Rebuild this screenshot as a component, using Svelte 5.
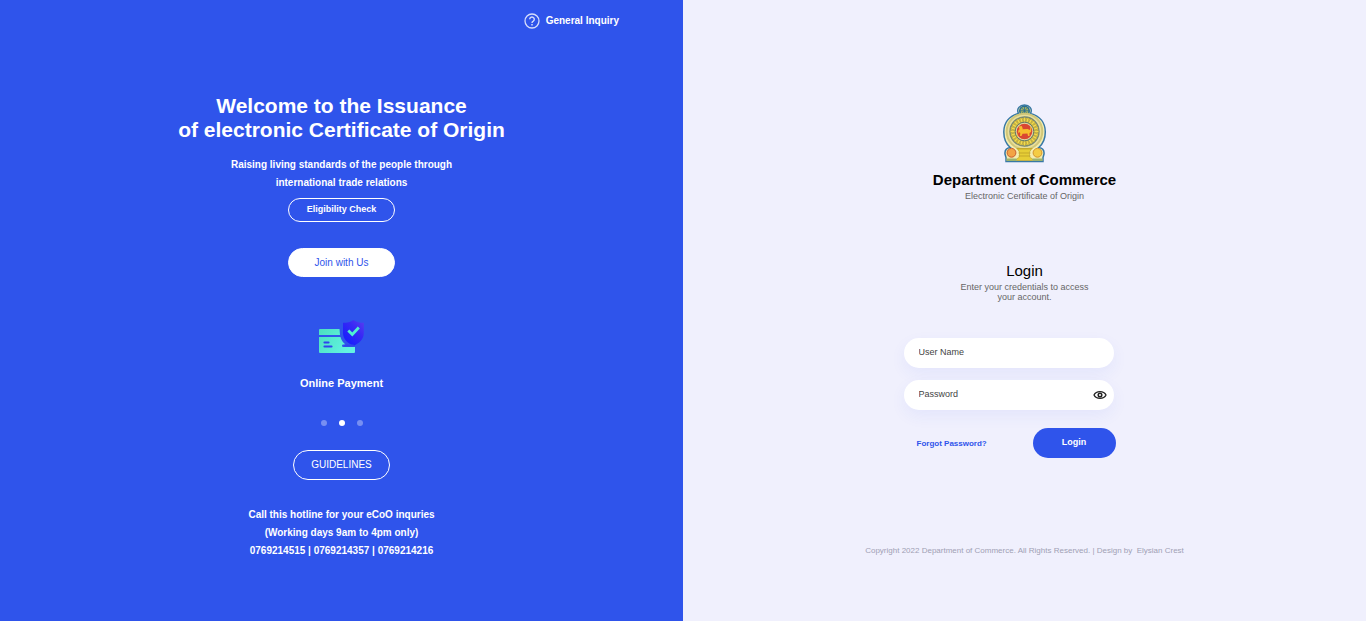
<script>
  let username = $state('');
  let password = $state('');
  let visible = $state(false);
  let active = $state(1);
  const slides = ['Registration', 'Online Payment', 'Certificates'];
  const rays = Array.from({ length: 24 }, (_, i) => i * 15);
</script>

<main>
  <section class="intro">
    <header>
      <a class="inquiry" href="#inquiry">
        <svg width="16" height="16" viewBox="0 0 16 16" fill="none" stroke="currentColor" aria-hidden="true">
          <circle cx="8" cy="8" r="7" stroke-width="1.3" />
          <path d="M5.700 6.300a2.300 2.200 0 1 1 3.600 1.800C8.300 8.700 8 9 8 9.900" stroke-width="1.400" />
          <path d="M8 11v1.400" stroke-width="1.500" />
        </svg>
        <span>General Inquiry</span>
      </a>
    </header>

    <h1>Welcome to the Issuance<br />of electronic Certificate of Origin</h1>
    <p class="lead">Raising living standards of the people through<br />international trade relations</p>
    <a class="pill check" href="#eligibility">Eligibility Check</a>
    <a class="pill join" href="#join">Join with Us</a>

    <div class="slide">
      <svg width="46" height="34" viewBox="0 0 46 34" aria-hidden="true">
        <defs>
          <linearGradient id="card" x1="0" x2="1" y1="0" y2="0.4">
            <stop offset="0" stop-color="#4be0c0" />
            <stop offset="1" stop-color="#63f3e2" />
          </linearGradient>
          <linearGradient id="shield" x1="1" x2="0.3" y1="0" y2="0.8">
            <stop offset="0" stop-color="#5a3df0" />
            <stop offset="0.500" stop-color="#3829f5" />
            <stop offset="1" stop-color="#1d20fb" />
          </linearGradient>
        </defs>
        <path fill="url(#card)" d="M2 9h19.500l.5 6H1v-5q0-1 1-1zM1 17h21.500c.8 3 2.500 5.600 5 7.500h-2.300q-1.200 0-1.200 1.200t1.200 1.300H37v5q0 1-1 1H2q-1 0-1-1z" />
        <path d="M6.500 22.500h4M6.500 26.500h7" stroke="#3044ee" stroke-width="2.200" stroke-linecap="round" />
        <path fill="url(#shield)" d="M35.500 0c2.500 2 6.500 2.800 10.300 2.800v10.500c0 5.500-4.300 10-10.300 12.700-6-2.700-10.500-7.200-10.500-12.700V2.800C29 2.800 33 2 35.500 0z" />
        <path d="M30.300 10.500l4 4 6.500-7" fill="none" stroke="#4ff0d2" stroke-width="2.800" />
        <path d="M27 25.500h8" stroke="#3044ee" stroke-width="2" stroke-linecap="round" />
      </svg>
      <h2>{slides[active]}</h2>
    </div>
    <div class="dots">
      {#each slides as name, i}
        <button class:on={active === i} aria-label={name} onclick={() => (active = i)}></button>
      {/each}
    </div>

    <a class="pill guide" href="#guidelines">GUIDELINES</a>
    <p class="hotline">
      Call this hotline for your eCoO inquries<br />(Working days 9am to 4pm only)<br />0769214515 | 0769214357 | 0769214216
    </p>
  </section>

  <section class="access">
    <svg class="emblem" width="44" height="59" viewBox="0 0 44 59" aria-hidden="true">
      <path fill="#f5edb0" stroke="#3878a5" stroke-width="1.500" d="M15.500 9.500C13 4.500 17 1 21.500 1S30 4.500 27.500 9.500C37 12 42.300 19 42.300 28c0 6.500-2.500 12-6.500 15.500 4 .5 5.500 3.500 5.200 6.500l-1 3.500v4H3v-4L2 50c-.3-3 1.200-6 5.200-6.500C3.200 40 .8 34.500 .8 28 .8 19 6 12 15.500 9.500z" />
      <circle cx="21.500" cy="7" r="4.700" fill="#a8b45e" stroke="#286e93" stroke-width="1.600" />
      <path d="M21.500 2.500v8.600M17.200 6.800h8.600M18.500 3.800l6 6M24.500 3.800l-6 6" stroke="#286e93" stroke-width=".8" />
      <g transform="translate(-.5 -1)">
        <circle cx="22" cy="28.500" r="17.800" fill="#e9df9a" stroke="#d0c678" stroke-width="2" />
        <circle cx="22" cy="28.500" r="14.500" fill="#dfc83e" stroke="#718777" stroke-width="1.300" />
        {#each rays as r}
          <ellipse cx="22" cy="16.800" rx="1.200" ry="2.600" fill="#f1da4b" stroke="#9c8c45" stroke-width=".5" transform="rotate({r} 22 28.500)" />
        {/each}
        <circle cx="22" cy="28.500" r="9.300" fill="#e5d8a5" stroke="#637a66" stroke-width="1" />
        <circle cx="22" cy="28.500" r="7.800" fill="#d94732" />
        <path fill="#f7bd2d" d="M16 27l2-1.500 2 .8 5-.3 2.500 1 .5-3.500 1 .5-.5 5-1.500 1v3h-1.500l-.5-2.500-5 .2-1 2.300h-1.500l.3-3-1.300-1-1 1.500V34h-1zM16.300 23.500l3-.5 1 3-3 1z" />
      </g>
      <path fill="#e6ce36" stroke="#b69d2c" stroke-width=".6" d="M14.500 45h14l-2 3v5l3 2v1.500h-16V55l3-2v-5z" />
      <path d="M13.500 44.500h16M15.500 49h12M15.500 52h12" stroke="#c5a928" stroke-width="1" />
      <path fill="#9db36e" d="M3.500 54.500h10V57h-10zM29.500 54.500h10V57h-10z" />
      <circle cx="8.500" cy="48.800" r="4.400" fill="#f3a344" stroke="#c95b30" stroke-width="1" />
      <circle cx="34.500" cy="48.800" r="4.400" fill="#f5cc45" stroke="#d4922b" stroke-width="1" />
    </svg>
    <h2 class="dept">Department of Commerce</h2>
    <p class="sub">Electronic Certificate of Origin</p>

    <h3>Login</h3>
    <p class="hint">Enter your credentials to access<br />your account.</p>

    <form onsubmit={(e) => e.preventDefault()}>
      <div class="field">
        <input type="text" placeholder="User Name" aria-label="User Name" bind:value={username} />
      </div>
      <div class="field">
        <input type={visible ? 'text' : 'password'} placeholder="Password" aria-label="Password" bind:value={password} />
        <button type="button" class="eye" aria-label="Show password" onclick={() => (visible = !visible)}>
          <svg width="14" height="10" viewBox="0 0 14 10" fill="none" stroke="#222" aria-hidden="true">
            <path d="M1 5C2.300 2.400 4.500 1.600 7 1.600S11.700 2.400 13 5C11.700 7.600 9.500 8.400 7 8.400S2.300 7.600 1 5z" stroke-width="1.300" />
            <circle cx="7" cy="5" r="1.800" stroke-width="1.500" />
          </svg>
        </button>
      </div>
      <div class="actions">
        <a href="#forgot">Forgot Password?</a>
        <button type="submit">Login</button>
      </div>
    </form>

    <footer>Copyright 2022 Department of Commerce. All Rights Reserved. | Design by &nbsp;<a href="#design">Elysian Crest</a></footer>
  </section>
</main>

<style>
  :global(body) {
    margin: 0;
    font-family: 'Liberation Sans', Arial, sans-serif;
  }
  main {
    display: grid;
    grid-template-columns: 1fr 1fr;
    min-height: 100vh;
  }
  section {
    display: flex;
    flex-direction: column;
    align-items: center;
    text-align: center;
  }
  h1, h2, h3, p {
    margin: 0;
  }
  a {
    color: inherit;
    text-decoration: none;
  }
  button {
    font-family: inherit;
    border: 0;
    padding: 0;
    cursor: pointer;
  }
  .intro {
    background: #2f54eb;
    color: #fff;
  }
  header {
    align-self: stretch;
    display: flex;
    justify-content: flex-end;
    padding: 12px 64px 0 0;
  }
  .inquiry {
    display: flex;
    align-items: center;
    gap: 6px;
    font-size: 10px;
    font-weight: 700;
    line-height: 18px;
  }
  .inquiry svg {
    opacity: 0.8;
  }
  h1 {
    margin-top: 64px;
    font-size: 21px;
    line-height: 24px;
  }
  .lead, .hotline {
    font-size: 10px;
    font-weight: 700;
    line-height: 18px;
  }
  .lead {
    margin-top: 14px;
  }
  .pill {
    box-sizing: border-box;
    border: 1px solid #fff;
    border-radius: 16px;
  }
  .check {
    margin-top: 6px;
    padding: 0 18px 2px;
    font-size: 9px;
    font-weight: 700;
    line-height: 20px;
  }
  .join {
    margin-top: 26px;
    padding: 1px 26px 0;
    background: #fff;
    color: #2f54eb;
    font-size: 10px;
    line-height: 26px;
  }
  .slide {
    margin-top: 43px;
  }
  .slide svg {
    display: block;
    margin: 0 auto;
  }
  .slide h2 {
    margin-top: 20px;
    font-size: 11px;
    line-height: 18px;
  }
  .dots {
    display: flex;
    gap: 12px;
    margin-top: 28px;
  }
  .dots button {
    width: 6px;
    height: 6px;
    border-radius: 50%;
    background: #fff;
    opacity: 0.35;
  }
  .dots .on {
    opacity: 1;
  }
  .guide {
    margin-top: 24px;
    padding: 0 17px;
    font-size: 10px;
    line-height: 28px;
  }
  .hotline {
    margin-top: 26px;
  }
  .access {
    background: #f0f0fd;
    color: #000;
  }
  .emblem {
    margin-top: 104px;
  }
  .dept {
    margin-top: 8px;
    font-size: 15px;
    line-height: 18px;
  }
  .sub, .hint {
    color: #666;
    font-size: 9px;
    line-height: 10px;
  }
  .sub {
    margin-top: 2px;
  }
  h3 {
    margin-top: 61px;
    font-size: 15px;
    font-weight: 400;
    line-height: 18px;
  }
  .hint {
    margin-top: 2px;
  }
  form {
    width: 242px;
    margin-top: 36px;
  }
  .field {
    display: flex;
    align-items: center;
    width: 210px;
    height: 30px;
    margin-bottom: 12px;
    border-radius: 15px;
    background: #fff;
    box-shadow: 0 6px 16px #2f54eb10;
  }
  input {
    flex: 1;
    min-width: 0;
    border: 0;
    outline: 0;
    padding: 0 15px 2px;
    background: none;
    color: #333;
    font-family: inherit;
    font-size: 9px;
  }
  input::placeholder {
    color: #444;
    opacity: 1;
  }
  .eye {
    display: flex;
    margin-right: 7px;
    background: none;
  }
  .actions {
    display: flex;
    align-items: center;
    justify-content: space-between;
    margin-top: 18px;
    padding: 0 30px 0 13px;
  }
  .actions a {
    color: #2f54eb;
    font-size: 8px;
    font-weight: 700;
  }
  .actions button {
    width: 83px;
    height: 30px;
    border-radius: 15px;
    padding-bottom: 2px;
    background: #2f54eb;
    color: #fff;
    font-size: 9px;
    font-weight: 700;
  }
  footer {
    margin-top: 87px;
    color: #a0a0b4;
    font-size: 8px;
    line-height: 12px;
  }
</style>
